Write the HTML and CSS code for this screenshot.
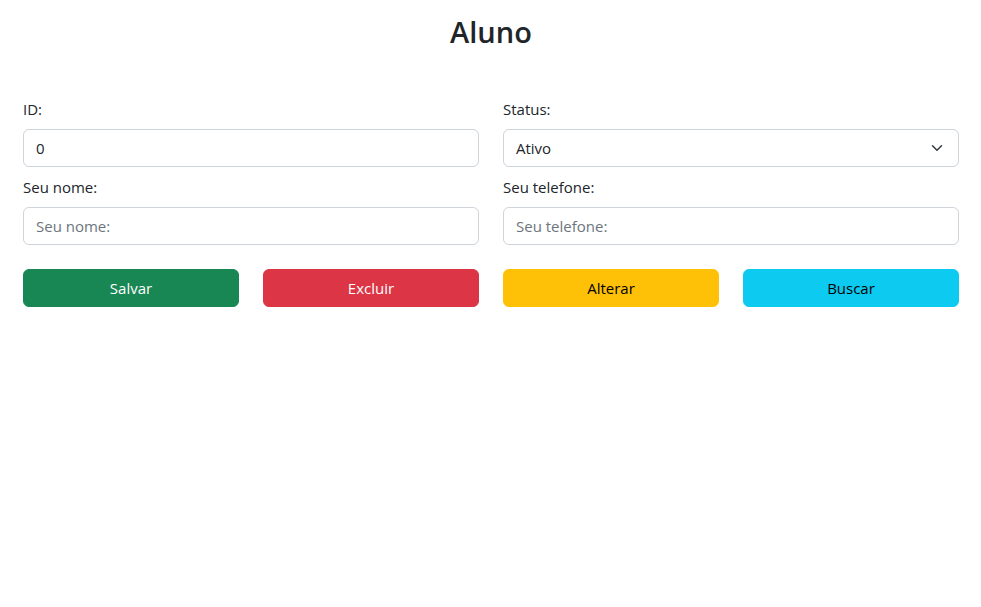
FILE: index.html
```html
<!DOCTYPE html>
<html lang="pt-BR">
<head>
<meta charset="utf-8">
<title>Aluno</title>
<link rel="stylesheet" href="styles.css">
</head>
<body>
<main class="page">
  <h2 class="title">Aluno</h2>
  <form class="form">
    <div class="grid">
      <div class="field">
        <label class="label" for="id">ID:</label>
        <input class="control" id="id" type="text" value="0">
      </div>
      <div class="field">
        <label class="label" for="status">Status:</label>
        <div class="select">
          <span class="select-value">Ativo</span>
          <svg class="chevron" width="16" height="12" viewBox="0 0 16 16" aria-hidden="true"><path fill="none" stroke="#343a40" stroke-linecap="round" stroke-linejoin="round" stroke-width="2" d="m2 5 6 6 6-6"/></svg>
        </div>
      </div>
      <div class="field">
        <label class="label" for="nome">Seu nome:</label>
        <input class="control" id="nome" type="text" placeholder="Seu nome:">
      </div>
      <div class="field">
        <label class="label" for="tel">Seu telefone:</label>
        <input class="control" id="tel" type="text" placeholder="Seu telefone:">
      </div>
    </div>
    <div class="buttons">
      <button type="button" class="btn btn-success">Salvar</button>
      <button type="button" class="btn btn-danger">Excluir</button>
      <button type="button" class="btn btn-warning">Alterar</button>
      <button type="button" class="btn btn-info">Buscar</button>
    </div>
  </form>
</main>
</body>
</html>
```

FILE: styles.css
```css
* { box-sizing: border-box; }
html, body { margin: 0; padding: 0; background: #fff; }
body {
  font-family: "Open Sans", "Noto Sans", sans-serif;
  font-size: 16px;
  line-height: 24px;
  color: #212529;
}
.page { padding: 13px 22px 0 23px; }
.title {
  margin: 0 0 46px;
  text-align: center;
  font-size: 29px;
  line-height: 38px;
  font-weight: 600;
}
.grid {
  display: grid;
  grid-template-columns: 1fr 1fr;
  column-gap: 24px;
  row-gap: 8px;
}
.field { display: flex; flex-direction: column; }
.label { display: block; margin-bottom: 8px; font-size: 15px; }
.control, .select {
  height: 38px;
  width: 100%;
  border: 1px solid #ced4da;
  border-radius: 6px;
  padding: 6px 12px;
  font: inherit;
  font-size: 15px;
  color: #212529;
  background: #fff;
}
.control::placeholder { color: #6c757d; opacity: 1; }
.select { display: flex; align-items: center; justify-content: space-between; padding-right: 13px; }
.chevron { display: block; }
.buttons {
  display: grid;
  grid-template-columns: repeat(4, 1fr);
  column-gap: 24px;
  margin-top: 24px;
}
.btn {
  height: 38px;
  border: 1px solid transparent;
  border-radius: 6px;
  font: inherit;
  font-size: 15px;
  padding: 0;
  cursor: pointer;
}
.btn-success { background: #198754; border-color: #198754; color: #fff; }
.btn-danger { background: #dc3545; border-color: #dc3545; color: #fff; }
.btn-warning { background: #ffc107; border-color: #ffc107; color: #000; }
.btn-info { background: #0dcaf0; border-color: #0dcaf0; color: #000; }
```
